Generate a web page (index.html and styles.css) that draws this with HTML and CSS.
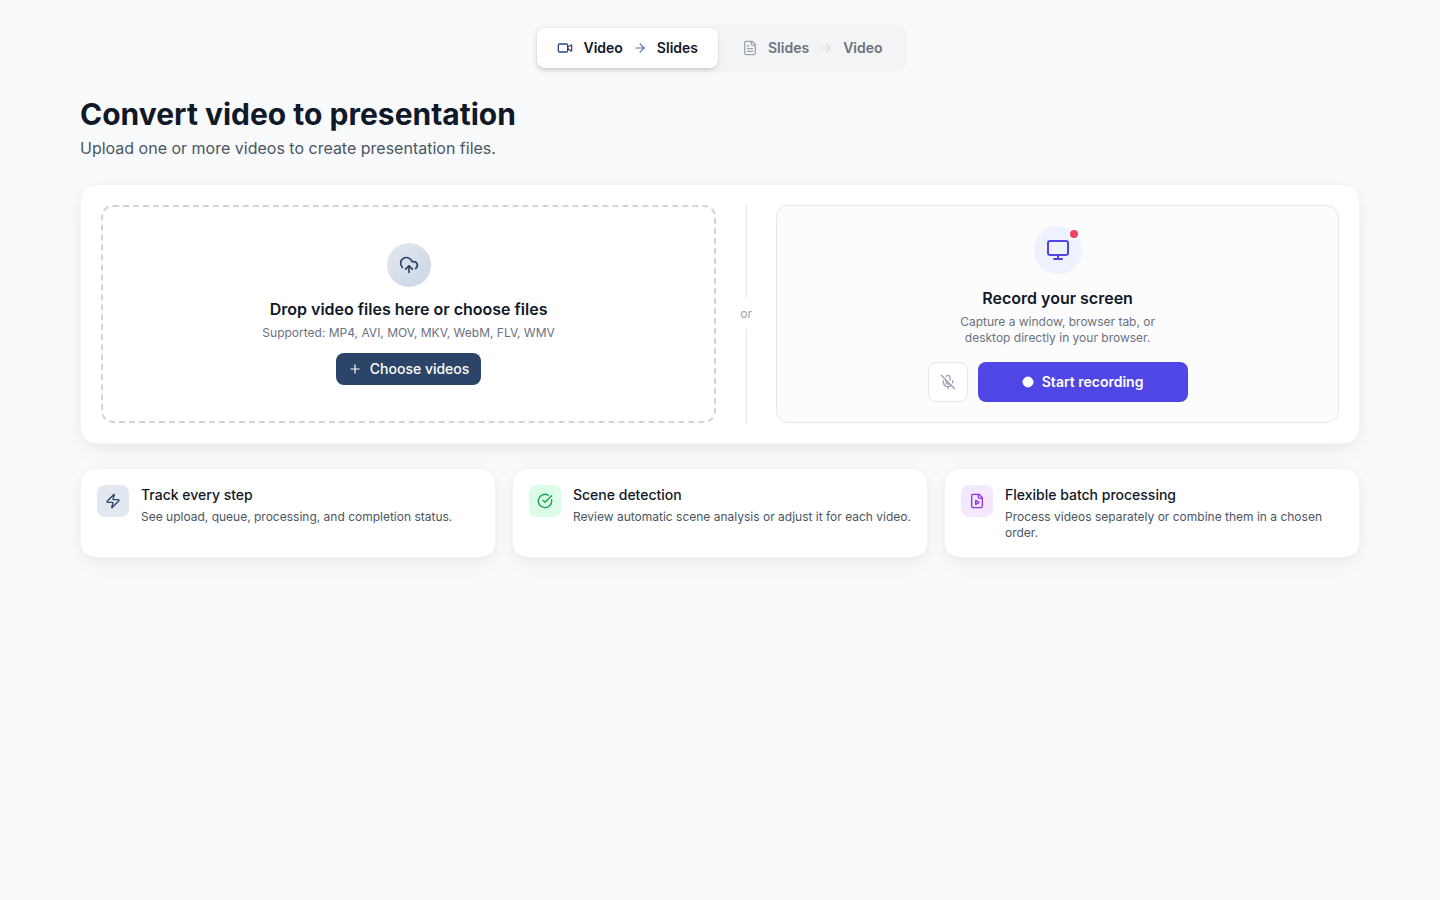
FILE: index.html
```html
<!DOCTYPE html>
<html lang="en">
<head>
	<meta charset="utf-8">
	<meta name="viewport" content="width=device-width, initial-scale=1">
	<title>Convert video to presentation</title>
	<link rel="stylesheet" href="styles.css">
</head>
<body>
<div class="wrapper">

	<!-- mode switch -->
	<nav class="tabs">
		<button type="button" class="tab tab--active">
			<svg class="icon" viewBox="0 0 24 24" width="16" height="16"><path d="m16 13 5.223 3.482a.5.5 0 0 0 .777-.416V7.87a.5.5 0 0 0-.752-.432L16 10.5"/><rect x="2" y="6" width="14" height="12" rx="2"/></svg>
			<span>Video</span>
			<svg class="icon tab__arrow" viewBox="0 0 24 24" width="14" height="14"><path d="M5 12h14"/><path d="m12 5 7 7-7 7"/></svg>
			<span>Slides</span>
		</button>
		<button type="button" class="tab">
			<svg class="icon" viewBox="0 0 24 24" width="16" height="16"><path d="M15 2H6a2 2 0 0 0-2 2v16a2 2 0 0 0 2 2h12a2 2 0 0 0 2-2V7Z"/><path d="M14 2v4a2 2 0 0 0 2 2h4"/><path d="M10 9H8"/><path d="M16 13H8"/><path d="M16 17H8"/></svg>
			<span>Slides</span>
			<svg class="icon tab__arrow" viewBox="0 0 24 24" width="14" height="14"><path d="M5 12h14"/><path d="m12 5 7 7-7 7"/></svg>
			<span>Video</span>
		</button>
	</nav>

	<header class="page__title">
		<h1>Convert video to presentation</h1>
		<p>Upload one or more videos to create presentation files.</p>
	</header>

	<!-- upload / record -->
	<section class="card source">
		<div class="drop">
			<div class="drop__icon">
				<svg class="icon" viewBox="0 0 24 24" width="20" height="20"><path d="M12 13v8"/><path d="M4 14.899A7 7 0 1 1 15.71 8h1.79a4.5 4.5 0 0 1 2.5 8.242"/><path d="m8 17 4-4 4 4"/></svg>
			</div>
			<h2>Drop video files here or choose files</h2>
			<p>Supported: MP4, AVI, MOV, MKV, WebM, FLV, WMV</p>
			<button type="button" class="btn btn__choose">
				<svg class="icon" viewBox="0 0 24 24" width="14" height="14"><path d="M5 12h14"/><path d="M12 5v14"/></svg>
				Choose videos
			</button>
		</div>

		<div class="divider"><span>or</span></div>

		<div class="record">
			<div class="record__icon">
				<svg class="icon" viewBox="0 0 24 24" width="24" height="24"><rect x="2" y="3" width="20" height="14" rx="2"/><path d="M8 21h8"/><path d="M12 17v4"/></svg>
				<span class="record__dot"></span>
			</div>
			<h2>Record your screen</h2>
			<p>Capture a window, browser tab, or desktop directly in your browser.</p>
			<div class="record__actions">
				<button type="button" class="btn btn__mic" aria-label="Microphone off">
					<svg class="icon" viewBox="0 0 24 24" width="16" height="16"><path d="m2 2 20 20"/><path d="M18.89 13.23A7.12 7.12 0 0 0 19 12v-2"/><path d="M5 10v2a7 7 0 0 0 12 5"/><path d="M15 9.34V5a3 3 0 0 0-5.68-1.33"/><path d="M9 9v3a3 3 0 0 0 5.12 2.12"/><path d="M12 19v3"/></svg>
				</button>
				<button type="button" class="btn btn__record">
					<svg class="icon icon--solid" viewBox="0 0 24 24" width="12" height="12"><circle cx="12" cy="12" r="10"/></svg>
					Start recording
				</button>
			</div>
		</div>
	</section>

	<!-- features -->
	<section class="features">
		<article class="card feature">
			<div class="feature__icon feature__icon--blue">
				<svg class="icon" viewBox="0 0 24 24" width="16" height="16"><path d="M4 14a1 1 0 0 1-.78-1.63l9.9-10.2a.5.5 0 0 1 .86.46l-1.92 6.02A1 1 0 0 0 13 10h7a1 1 0 0 1 .78 1.63l-9.9 10.2a.5.5 0 0 1-.86-.46l1.92-6.02A1 1 0 0 0 11 14z"/></svg>
			</div>
			<div>
				<h3>Track every step</h3>
				<p>See upload, queue, processing, and completion status.</p>
			</div>
		</article>
		<article class="card feature">
			<div class="feature__icon feature__icon--green">
				<svg class="icon" viewBox="0 0 24 24" width="16" height="16"><path d="M21.801 10A10 10 0 1 1 17 3.335"/><path d="m9 11 3 3L22 4"/></svg>
			</div>
			<div>
				<h3>Scene detection</h3>
				<p>Review automatic scene analysis or adjust it for each video.</p>
			</div>
		</article>
		<article class="card feature">
			<div class="feature__icon feature__icon--purple">
				<svg class="icon" viewBox="0 0 24 24" width="16" height="16"><path d="M15 2H6a2 2 0 0 0-2 2v16a2 2 0 0 0 2 2h12a2 2 0 0 0 2-2V7Z"/><path d="M14 2v4a2 2 0 0 0 2 2h4"/><path d="m10 11 5 3-5 3Z"/></svg>
			</div>
			<div>
				<h3>Flexible batch processing</h3>
				<p>Process videos separately or combine them in a chosen order.</p>
			</div>
		</article>
	</section>

</div>
</body>
</html>
```
FILE: styles.css
```css
*{
	margin: 0;
	padding: 0;
	box-sizing: border-box;
}

body{
	background-color: #f9fafc;
	color: #111827;
	font-family: Inter, "Liberation Sans", sans-serif;
	font-size: 14px;
	line-height: 20px;
}

button{
	font: inherit;
	cursor: pointer;
	border: none;
}

.wrapper{
	max-width: 1328px;
	margin: 0 auto;
	padding: 24px;
}

.icon{
	display: block;
	flex-shrink: 0;
	fill: none;
	stroke: currentColor;
	stroke-width: 2;
	stroke-linecap: round;
	stroke-linejoin: round;
}

.icon--solid{
	fill: currentColor;
}

/* mode switch */
.tabs{
	display: flex;
	gap: 4px;
	width: fit-content;
	margin: 0 auto 24px;
	padding: 4px;
	border-radius: 12px;
	background-color: #f3f4f6;
}

.tab{
	display: flex;
	align-items: center;
	gap: 10px;
	height: 40px;
	padding: 0 20px;
	border-radius: 8px;
	background: none;
	color: #6b7280;
	font-weight: 600;
}

.tab .icon{
	color: #9ca3af;
}

.tab .tab__arrow{
	color: #d9dce1;
}

.tab--active{
	background-color: #fff;
	color: #111827;
	box-shadow: 0 4px 6px -1px rgba(0, 0, 0, 0.1), 0 2px 4px -2px rgba(0, 0, 0, 0.1), 0 0 0 1px rgba(0, 0, 0, 0.03);
}

.tab--active .icon{
	color: #2c4a7c;
}

.tab--active .tab__arrow{
	color: #56739c;
}

.page__title{
	margin-bottom: 24px;
}

.page__title h1{
	margin-bottom: 4px;
	font-size: 30px;
	line-height: 36px;
	font-weight: 700;
}

.page__title p{
	color: #4b5563;
	font-size: 16px;
	line-height: 24px;
}

.card{
	background-color: #fff;
	border: 1px solid #f3f4f6;
	border-radius: 16px;
	box-shadow: 0 2px 15px -3px rgba(0, 0, 0, 0.07), 0 10px 20px -2px rgba(0, 0, 0, 0.04);
}

/* upload / record */
.source{
	display: grid;
	grid-template-columns: 1.093fr 12px 1fr;
	gap: 24px;
	margin-bottom: 24px;
	padding: 20px;
}

.source h2{
	margin-bottom: 4px;
	font-size: 16px;
	line-height: 24px;
	font-weight: 600;
}

.source p{
	color: #6b7280;
	font-size: 12px;
	line-height: 16px;
}

.drop{
	display: flex;
	flex-direction: column;
	align-items: center;
	justify-content: center;
	border: 2px dashed #d1d5db;
	border-radius: 12px;
	text-align: center;
}

.drop__icon{
	display: flex;
	align-items: center;
	justify-content: center;
	width: 44px;
	height: 44px;
	margin-bottom: 10px;
	border-radius: 50%;
	background-image: linear-gradient(135deg, #e2e8f0, #cbd5e5);
	color: #2c4468;
}

.btn{
	display: flex;
	align-items: center;
	justify-content: center;
	gap: 8px;
	border-radius: 8px;
}

.btn__choose{
	height: 32px;
	margin-top: 12px;
	padding: 0 12px;
	background-color: #2c4468;
	color: #fff;
	font-weight: 500;
}

.divider{
	display: flex;
	flex-direction: column;
	align-items: center;
	gap: 8px;
	color: #9ca3af;
	font-size: 12px;
	line-height: 16px;
}

.divider::before,
.divider::after{
	content: "";
	flex: 1;
	width: 1px;
	background-color: #e5e7eb;
}

.record{
	display: flex;
	flex-direction: column;
	align-items: center;
	padding: 20px;
	border: 1px solid #e5e7eb;
	border-radius: 12px;
	background-color: #fcfcfd;
	text-align: center;
}

.record__icon{
	position: relative;
	display: flex;
	align-items: center;
	justify-content: center;
	width: 48px;
	height: 48px;
	margin-bottom: 12px;
	border-radius: 50%;
	background-color: #eef2ff;
	color: #4f46e5;
}

.record__dot{
	position: absolute;
	top: 2px;
	right: 2px;
	width: 12px;
	height: 12px;
	border: 2px solid #fff;
	border-radius: 50%;
	background-color: #f43f5e;
}

.record p{
	max-width: 220px;
}

.record__actions{
	display: flex;
	gap: 10px;
	width: 100%;
	max-width: 260px;
	margin-top: 16px;
}

.btn__mic{
	width: 40px;
	height: 40px;
	border: 1px solid #e5e7eb;
	background-color: #fff;
	color: #9ca3af;
}

.btn__record{
	flex: 1;
	height: 40px;
	background-color: #4f46e5;
	color: #fff;
	font-weight: 600;
}

/* features */
.features{
	display: grid;
	grid-template-columns: repeat(3, 1fr);
	gap: 16px;
}

.feature{
	display: flex;
	gap: 12px;
	padding: 16px;
}

.feature h3{
	margin-bottom: 4px;
	font-size: 14px;
	line-height: 20px;
	font-weight: 500;
}

.feature p{
	color: #4b5563;
	font-size: 12px;
	line-height: 16px;
}

.feature__icon{
	display: flex;
	align-items: center;
	justify-content: center;
	flex-shrink: 0;
	width: 32px;
	height: 32px;
	border-radius: 8px;
}

.feature__icon--blue{
	background-color: #e2e8f0;
	color: #2c4468;
}

.feature__icon--green{
	background-color: #dcfce7;
	color: #16a34a;
}

.feature__icon--purple{
	background-color: #f3e8ff;
	color: #9333ea;
}

@media (max-width: 900px){
	.source,
	.features{
		grid-template-columns: 1fr;
	}

	.drop{
		padding: 32px 16px;
	}

	.divider{
		flex-direction: row;
	}

	.divider::before,
	.divider::after{
		width: auto;
		height: 1px;
	}
}
```
